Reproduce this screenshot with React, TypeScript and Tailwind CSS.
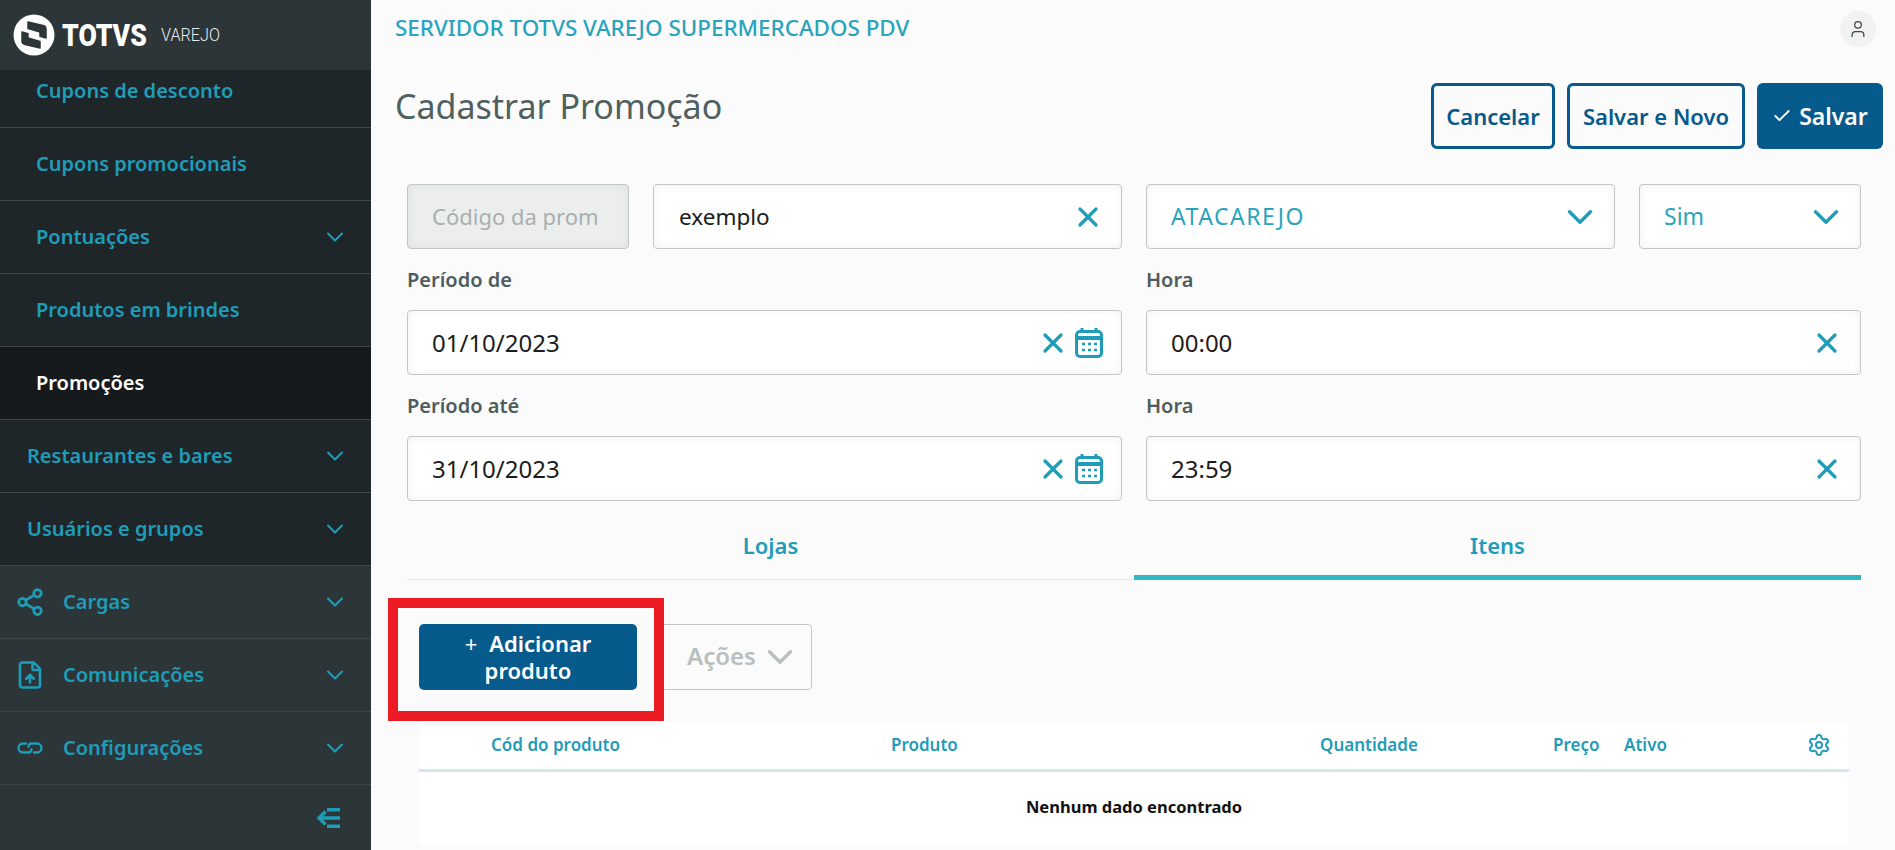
import { Check, ChevronDown, FileUp, Settings, Share2, User, X } from 'lucide-react';

const subItems = ['Cupons promocionais', 'Pontuações', 'Produtos em brindes'];
const withChevron = ['Pontuações'];

function Logo() {
  return (
    <svg viewBox="0 0 42 42" className="w-[42px] h-[42px] shrink-0">
      <circle cx="21" cy="21" r="20.5" fill="#fff" />
      <g fill="#2c3538" stroke="#2c3538" strokeWidth="1.5" strokeLinejoin="round">
        <path d="M15 8l15 3.5q3 .8 3 3.5v9l-6-1.8V18L15 14.5Z" />
        <path d="M27 34l-15-3.5q-3-.8-3-3.5v-9l6 1.8V24l12 3.5Z" />
      </g>
    </svg>
  );
}

function CalendarIcon() {
  return (
    <svg viewBox="0 0 28 30" className="w-[28px] h-[30px] shrink-0" fill="none" stroke="#1f9cb8" strokeWidth="3">
      <path d="M7 0v5M21 0v5" />
      <rect x="1.5" y="3.5" width="25" height="25" rx="3.5" />
      <path d="M1.5 10h25" strokeWidth="4" />
      <path d="M7 16h3M13 16h3M19 16h3M7 22h3M13 22h3M19 22h3" strokeWidth="2.6" />
    </svg>
  );
}

function ChainIcon() {
  return (
    <svg viewBox="0 0 26 12" className="w-[26px] h-[12px]" fill="none" stroke="currentColor" strokeWidth="2.4" strokeLinecap="round">
      <path d="M9 1.5H6a4.5 4.5 0 0 0 0 9h5.5a3 3 0 0 0 3-3" />
      <path d="M17 10.5h3a4.5 4.5 0 0 0 0-9h-5.5a3 3 0 0 0-3 3" />
    </svg>
  );
}

function Field({ value, calendar, className }: { value: string; calendar?: boolean; className?: string }) {
  return (
    <div className={`h-[65px] flex items-center bg-white border border-[#c3c6c7] rounded-[4px] shadow-[inset_0_0_10px_rgba(0,0,0,0.06)] text-[#1c1c1c] ${className ?? ''}`}>
      <span className="flex-1">{value}</span>
      <X className="w-[34px] h-[32px] text-[#1f9cb8]" strokeWidth={2.4} />
      {calendar && <CalendarIcon />}
    </div>
  );
}

function Select({ value, className }: { value: string; className?: string }) {
  return (
    <div className={`h-[65px] flex items-center bg-white border border-[#c3c6c7] rounded-[4px] shadow-[inset_0_0_10px_rgba(0,0,0,0.06)] text-[#2aa3bd] pl-[24px] pr-[13px] ${className ?? ''}`}>
      <span className="flex-1">{value}</span>
      <ChevronDown className="w-[42px] h-[42px] text-[#1f9cb8]" strokeWidth={1.9} />
    </div>
  );
}

function NavRow({ label, indent, chevron, active, icon }: { label: string; indent: string; chevron?: boolean; active?: boolean; icon?: React.ReactNode }) {
  return (
    <div className={`h-[73px] flex items-center border-b border-[#3d4649] pr-[22px] text-[20px] font-semibold ${indent} ${active ? 'bg-[#161a1c] text-white' : 'text-[#1f9cb8]'}`}>
      {icon && <span className="w-[46px] shrink-0 flex items-center">{icon}</span>}
      <span className="flex-1">{label}</span>
      {chevron && <ChevronDown className="w-[28px] h-[28px]" strokeWidth={1.8} />}
    </div>
  );
}

export default function App() {
  return (
    <div className="relative flex w-[1895px] h-[850px] overflow-hidden bg-[#fbfbfb] font-['Noto_Sans',sans-serif]">
      <aside className="w-[371px] shrink-0 flex flex-col bg-[#2c3639]">
        <div className="h-[70px] shrink-0 flex items-center pl-[13px] bg-[#2c3538]">
          <Logo />
          <span className="ml-[7px] w-[86px] origin-left scale-x-[0.83] text-[32px] leading-none font-black text-white font-['Roboto',sans-serif]">TOTVS</span>
          <span className="ml-[13px] w-[58px] origin-left scale-x-[0.9] text-[18px] leading-none font-light text-[#e8eaeb] font-['Roboto',sans-serif]">VAREJO</span>
        </div>
        <div className="bg-[#1f2629]">
          <div className="h-[58px] flex items-center pl-[36px] pb-[16px] border-b border-[#3d4649] text-[20px] font-semibold text-[#1f9cb8]">
            Cupons de desconto
          </div>
          {subItems.map((item) => (
            <NavRow key={item} label={item} indent="pl-[36px]" chevron={withChevron.includes(item)} />
          ))}
          <NavRow label="Promoções" indent="pl-[36px]" active />
          <NavRow label="Restaurantes e bares" indent="pl-[27px]" chevron />
          <NavRow label="Usuários e grupos" indent="pl-[27px]" chevron />
        </div>
        <NavRow label="Cargas" indent="pl-[17px]" chevron icon={<Share2 className="w-[30px] h-[30px] -ml-[2px] shrink-0" strokeWidth={2.2} />} />
        <NavRow label="Comunicações" indent="pl-[17px]" chevron icon={<FileUp className="w-[30px] h-[32px] -ml-[2px] shrink-0" strokeWidth={2.1} />} />
        <NavRow label="Configurações" indent="pl-[17px]" chevron icon={<ChainIcon />} />
        <div className="flex-1 flex items-center justify-end pr-[30px]">
          <svg viewBox="0 0 25 20" className="w-[25px] h-[20px]" fill="none" stroke="#1f9cb8" strokeWidth="3.4">
            <path d="M11 1.7h13M3 10h21M11 18.3h13M9.5 3.5L3 10l6.5 6.5" />
          </svg>
        </div>
      </aside>

      <main className="flex-1 min-w-0">
        <div className="h-[58px] flex items-center justify-between pl-[24px] pr-[19px]">
          <span className="pb-[3px] text-[22.4px] font-medium text-[#2aa3bd]">SERVIDOR TOTVS VAREJO SUPERMERCADOS PDV</span>
          <div className="w-[36px] h-[36px] rounded-full bg-[#f1f2f2] flex items-center justify-center">
            <User className="w-[20px] h-[20px] text-[#3a4649]" strokeWidth={1.5} />
          </div>
        </div>

        <div className="h-[91px] flex items-start justify-between pt-[25px] pl-[24px] pr-[12px]">
          <h1 className="text-[34px] leading-[46px] text-[#50605f] mt-0">Cadastrar Promoção</h1>
          <div className="flex gap-[12px] font-semibold">
            <button className="w-[124px] h-[66px] rounded-[6px] border-[3px] border-[#065a8c] text-[#065a8c] text-[22px]">Cancelar</button>
            <button className="w-[178px] h-[66px] rounded-[6px] border-[3px] border-[#065a8c] text-[#065a8c] text-[22px]">Salvar e Novo</button>
            <button className="w-[126px] h-[66px] rounded-[6px] bg-[#065a8c] text-white text-[23px] flex items-center justify-center gap-[7px]">
              <Check className="w-[20px] h-[20px]" strokeWidth={2.2} />
              Salvar
            </button>
          </div>
        </div>

        <div className="pt-[35px] pl-[36px] pr-[34px]">
          <div className="flex">
            <div className="w-[222px] h-[65px] flex items-center pl-[24px] bg-[#eceeee] border border-[#c3c6c7] rounded-[4px] shadow-[inset_0_0_10px_rgba(0,0,0,0.06)] text-[22px] text-[#a9afb0]">
              Código da prom
            </div>
            <Field value="exemplo" className="w-[469px] ml-[24px] pl-[25px] pr-[16px] text-[22.5px]" />
            <Select value="ATACAREJO" className="w-[469px] ml-[24px] text-[23px] tracking-[1.5px]" />
            <Select value="Sim" className="w-[222px] ml-[24px] text-[23px]" />
          </div>

          <div className="grid grid-cols-[715px_715px] gap-x-[24px]">
            <div className="h-[61px] flex items-center text-[20px] font-semibold text-[#4e5c5f]">Período de</div>
            <div className="h-[61px] flex items-center text-[20px] font-semibold text-[#4e5c5f]">Hora</div>
            <Field value="01/10/2023" calendar className="pl-[24px] pr-[18px] gap-[5px] text-[24px]" />
            <Field value="00:00" className="pl-[24px] pr-[16px] text-[24px]" />
            <div className="h-[61px] flex items-center text-[20px] font-semibold text-[#4e5c5f]">Período até</div>
            <div className="h-[61px] flex items-center text-[20px] font-semibold text-[#4e5c5f]">Hora</div>
            <Field value="31/10/2023" calendar className="pl-[24px] pr-[18px] gap-[5px] text-[24px]" />
            <Field value="23:59" className="pl-[24px] pr-[16px] text-[24px]" />
          </div>

          <div className="h-[79px] flex items-end text-[22px] font-semibold text-[#1f9cb8]">
            <div className="flex-1 h-full flex items-end justify-center pb-[17px] border-b border-[#e6e8e8]">Lojas</div>
            <div className="flex-1 h-full flex items-end justify-center pb-[13px] border-b-[5px] border-[#2fb6c7]">Itens</div>
          </div>
        </div>

        <div className="pl-[48px] pr-[46px]">
          <div className="h-[142px] flex items-start pt-[44px]">
            <button className="w-[218px] h-[66px] rounded-[5px] bg-[#065a8c] text-white text-[22px] leading-[27px] font-semibold">
              <span className="font-normal mr-[12px]">+</span>Adicionar<br />produto
            </button>
            <button className="ml-[23px] w-[152px] h-[66px] pl-[26px] rounded-[4px] border border-[#c3c6c7] flex items-center gap-[3px] text-[24px] font-semibold text-[#b9bebf]">
              <span className="-mt-[3px]">Ações</span>
              <ChevronDown className="w-[42px] h-[42px] shrink-0" strokeWidth={1.9} />
            </button>
          </div>

          <div className="h-[122px] bg-white">
            <div className="h-[50px] pb-[2px] grid grid-cols-[72px_400px_429px_233px_71px_1fr] items-center border-b-[3px] border-[#d2e8ec] text-[17px] font-semibold text-[#1f9cb8]">
              <span />
              <span>Cód do produto</span>
              <span>Produto</span>
              <span>Quantidade</span>
              <span>Preço</span>
              <span className="flex items-center justify-between pr-[18px]">
                Ativo
                <Settings className="w-[24px] h-[24px]" strokeWidth={2} />
              </span>
            </div>
            <div className="h-[70px] flex items-center justify-center text-[16.5px] font-bold text-[#111]">Nenhum dado encontrado</div>
          </div>
        </div>
      </main>

      {/* marcacao vermelha por cima do botao */}
      <div className="absolute left-[388px] top-[598px] w-[276px] h-[123px] border-[10px] border-[#ed1c24]" />
    </div>
  );
}
